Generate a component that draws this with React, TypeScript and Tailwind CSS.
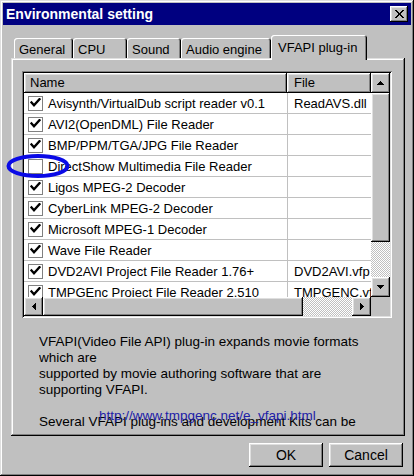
import React from "react";

const raised =
  "shadow-[inset_-1px_-1px_0_#000,inset_1px_1px_0_#dfdfdf,inset_-2px_-2px_0_#808080,inset_2px_2px_0_#fff]";
const raisedBtn =
  "shadow-[inset_-1px_-1px_0_#000,inset_1px_1px_0_#fff,inset_-2px_-2px_0_#808080,inset_2px_2px_0_#dfdfdf]";
const sunken =
  "shadow-[inset_1px_1px_0_#808080,inset_-1px_-1px_0_#fff,inset_2px_2px_0_#000,inset_-2px_-2px_0_#dfdfdf]";
const dither =
  "bg-[repeating-conic-gradient(#c0c0c0_0%_25%,#ffffff_0%_50%)] bg-[length:2px_2px]";

const rows: { name: string; file: string; checked: boolean }[] = [
  { name: "Avisynth/VirtualDub script reader v0.1", file: "ReadAVS.dll", checked: true },
  { name: "AVI2(OpenDML) File Reader", file: "", checked: true },
  { name: "BMP/PPM/TGA/JPG File Reader", file: "", checked: true },
  { name: "DirectShow Multimedia File Reader", file: "", checked: false },
  { name: "Ligos MPEG-2 Decoder", file: "", checked: true },
  { name: "CyberLink MPEG-2 Decoder", file: "", checked: true },
  { name: "Microsoft MPEG-1 Decoder", file: "", checked: true },
  { name: "Wave File Reader", file: "", checked: true },
  { name: "DVD2AVI Project File Reader 1.76+", file: "DVD2AVI.vfp", checked: true },
  { name: "TMPGEnc Project File Reader 2.510", file: "TMPGENC.vfp", checked: true },
];

function Check() {
  return (
    <svg width="11" height="10" viewBox="0 0 11 10">
      <polyline points="1.5,4.5 4,7.3 9.5,1.2" fill="none" stroke="#000" strokeWidth="2.4" strokeLinecap="square" />
    </svg>
  );
}

function Arrow({ dir }: { dir: "up" | "down" | "left" | "right" }) {
  const pts: Record<string, string> = {
    up: "3.5,0 7,4 0,4",
    down: "0,0 7,0 3.5,4",
    left: "4,0 4,7 0,3.5",
    right: "0,0 4,3.5 0,7",
  };
  const vertical = dir === "up" || dir === "down";
  return (
    <svg
      width={vertical ? 7 : 4}
      height={vertical ? 4 : 7}
      viewBox={vertical ? "0 0 7 4" : "0 0 4 7"}
      shapeRendering="crispEdges"
    >
      <polygon points={pts[dir]} fill="#000" />
    </svg>
  );
}

function Tab({ label, w, selected }: { label: string; w: string; selected?: boolean }) {
  if (selected) {
    return (
      <div
        className={`${w} h-[25px] -mb-[2px] relative z-10 bg-[#c0c0c0] rounded-t-[3px] shadow-[inset_1px_1px_0_#fff,inset_-1px_0_0_#000,inset_-2px_0_0_#808080] flex items-start pt-[3px] px-[7px] text-[13px] text-black`}
      >
        {label}
      </div>
    );
  }
  return (
    <div
      className={`${w} h-[20px] bg-[#c0c0c0] rounded-t-[3px] shadow-[inset_1px_1px_0_#fff,inset_-1px_0_0_#000,inset_-2px_0_0_#808080] flex items-start pt-[2px] px-[5px] text-[13px] text-black`}
    >
      {label}
    </div>
  );
}

export default function App() {
  return (
    <div className="w-[414px] h-[476px] relative overflow-hidden bg-[#c0c0c0] p-[3px] font-['Liberation_Sans',Arial,sans-serif] text-[13px] text-black shadow-[inset_-1px_-1px_0_#000,inset_1px_1px_0_#dfdfdf,inset_-2px_-2px_0_#808080,inset_2px_2px_0_#fff]">
      <div className="flex flex-col h-full">
        {/* Title bar */}
        <div className="h-[22px] bg-[#000080] flex items-center justify-between pl-[3px] pr-[3px]">
          <span className="text-white font-bold text-[14px] leading-none">Environmental setting</span>
          <div className={`w-[18px] h-[16px] bg-[#c0c0c0] ${raisedBtn} flex items-center justify-center`}>
            <svg width="9" height="8" viewBox="0 0 9 8" shapeRendering="crispEdges">
              <path d="M0 0h2l2.5 2.7L7 0h2L5.5 4 9 8H7L4.5 5.3 2 8H0l3.5-4z" fill="#000" />
            </svg>
          </div>
        </div>

        {/* Tabs */}
        <div className="mt-[10px] ml-[8px] mr-[6px] flex flex-col">
          <div className="flex items-end pl-[3px] h-[23px]">
            <Tab label="General" w="w-[59px]" />
            <Tab label="CPU" w="w-[54px]" />
            <Tab label="Sound" w="w-[54px]" />
            <Tab label="Audio engine" w="w-[90px]" />
            <Tab label="VFAPI plug-in" w="w-[96px]" selected />
          </div>

          {/* Panel */}
          <div className={`h-[378px] bg-[#c0c0c0] ${raised} pl-[11px] pt-[13px] flex flex-col overflow-hidden`}>
            {/* List view */}
            <div className={`w-[370px] h-[247px] p-[2px] bg-white ${sunken}`}>
              <div className="grid grid-cols-[347px_19px] grid-rows-[224px_19px] h-full w-full">
                <div className="overflow-hidden bg-white">
                  {/* header */}
                  <div className="flex h-[20px]">
                    <div className={`w-[263px] shrink-0 bg-[#c0c0c0] ${raisedBtn} flex items-center pl-[6px]`}>
                      Name
                    </div>
                    <div className={`flex-1 bg-[#c0c0c0] ${raisedBtn} flex items-center pl-[7px]`}>
                      File
                    </div>
                  </div>
                  {rows.map((r) => (
                    <div key={r.name} className="flex h-[21px] border-b border-[#c0c0c0]">
                      <div className="w-[264px] shrink-0 flex items-center pl-[4px] border-r border-[#c0c0c0] whitespace-nowrap overflow-hidden">
                        <div className="w-[15px] h-[15px] shrink-0 border border-[#808080] bg-white flex items-center justify-center">
                          {r.checked && <Check />}
                        </div>
                        <span className="ml-[5px] pt-[1px]">{r.name}</span>
                      </div>
                      <div className="flex-1 flex items-center pl-[6px] pt-[1px] whitespace-nowrap overflow-hidden">
                        {r.file}
                      </div>
                    </div>
                  ))}
                </div>

                {/* vertical scrollbar */}
                <div className="flex flex-col">
                  <div className={`h-[20px] bg-[#c0c0c0] ${raisedBtn} flex items-center justify-center`}>
                    <Arrow dir="up" />
                  </div>
                  <div className={`h-[149px] bg-[#c0c0c0] ${raisedBtn}`} />
                  <div className={`flex-1 ${dither}`} />
                  <div className={`h-[20px] bg-[#c0c0c0] ${raisedBtn} flex items-center justify-center`}>
                    <Arrow dir="down" />
                  </div>
                </div>

                {/* horizontal scrollbar */}
                <div className="flex">
                  <div className={`w-[19px] bg-[#c0c0c0] ${raisedBtn} flex items-center justify-center`}>
                    <Arrow dir="left" />
                  </div>
                  <div className={`w-[260px] bg-[#c0c0c0] ${raisedBtn}`} />
                  <div className={`flex-1 ${dither}`} />
                  <div className={`w-[19px] bg-[#c0c0c0] ${raisedBtn} flex items-center justify-center`}>
                    <Arrow dir="right" />
                  </div>
                </div>
                <div className="bg-[#c0c0c0]" />
              </div>
            </div>

            {/* Description */}
            <div className="relative mt-[16px] ml-[17px] h-[96px] overflow-hidden leading-[16px] text-[13.5px]">
              <div>VFAPI(Video File API) plug-in expands movie formats</div>
              <div>which are</div>
              <div>supported by movie authoring software that are</div>
              <div>supporting VFAPI.</div>
              <div>&nbsp;</div>
              <div>Several VFAPI plug-ins and development Kits can be</div>
              <div className="absolute left-[60px] top-[75px] text-[#2020a8] leading-[14px]">
                http://www.tmpgenc.net/e_vfapi.html
              </div>
            </div>
          </div>
        </div>

        {/* Buttons */}
        <div className="mt-[7px] flex justify-end gap-[6px] pr-[8px]">
          <div className={`w-[74px] h-[24px] bg-[#c0c0c0] ${raisedBtn} flex items-center justify-center text-[14px]`}>
            OK
          </div>
          <div className={`w-[74px] h-[24px] bg-[#c0c0c0] ${raisedBtn} flex items-center justify-center text-[14px]`}>
            Cancel
          </div>
        </div>
      </div>

      {/* Annotation ellipse */}
      <svg className="absolute left-0 top-0 pointer-events-none" width="414" height="476">
        <ellipse cx="38" cy="166" rx="29.5" ry="10" fill="none" stroke="#0a0ae6" strokeWidth="4" />
      </svg>
    </div>
  );
}
